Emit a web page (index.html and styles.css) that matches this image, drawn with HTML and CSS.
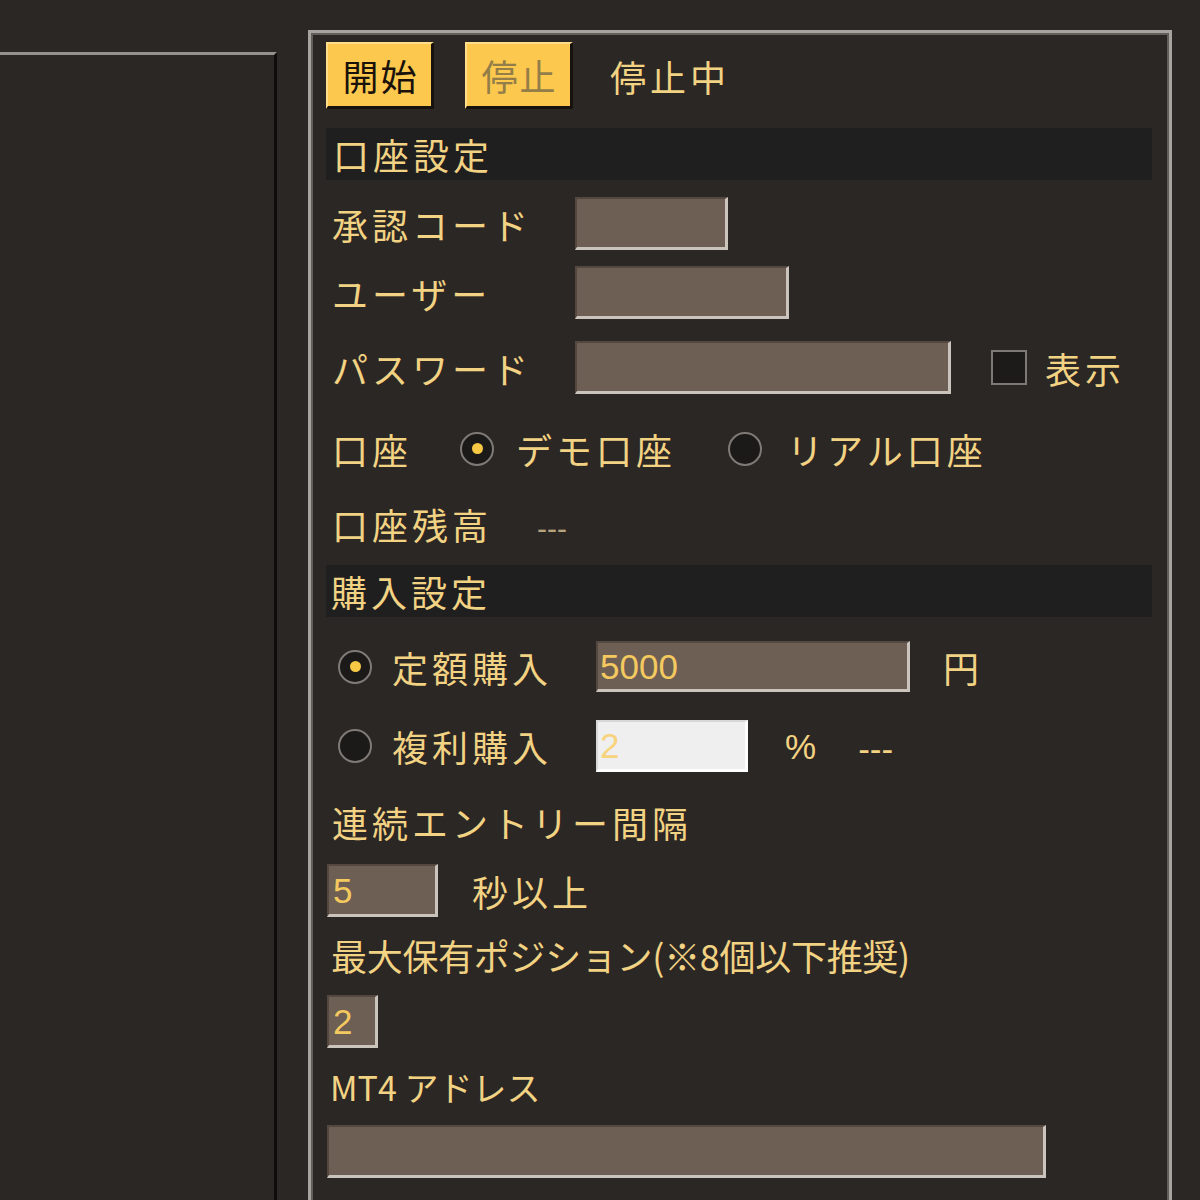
FILE: index.html
```html
<!DOCTYPE html>
<html lang="ja">
<head>
<meta charset="utf-8">
<title>設定</title>
<link rel="stylesheet" href="styles.css">
</head>
<body>
<div class="screen">
  <div class="side"></div>
  <div class="panel">
    <div class="toolbar">
      <div class="btn">開始</div>
      <div class="btn disabled">停止</div>
      <span class="status">停止中</span>
    </div>

    <div class="section">口座設定</div>

    <div class="row r-code">
      <span class="label">承認コード</span>
      <div class="field w-code"></div>
    </div>
    <div class="row r-user">
      <span class="label">ユーザー</span>
      <div class="field w-user"></div>
    </div>
    <div class="row r-pass">
      <span class="label">パスワード</span>
      <div class="field w-pass"></div>
      <div class="check"></div>
      <span class="txt show">表示</span>
    </div>
    <div class="row r-acct">
      <span class="label acct-label">口座</span>
      <div class="radio on"></div>
      <span class="txt opt">デモ口座</span>
      <div class="radio second"></div>
      <span class="txt opt">リアル口座</span>
    </div>
    <div class="row r-bal">
      <span class="txt">口座残高</span>
      <span class="dim-dash">---</span>
    </div>

    <div class="section s2">購入設定</div>

    <div class="row r-fixed">
      <div class="radio on"></div>
      <span class="txt buy-label">定額購入</span>
      <div class="field w-fixed"><span class="num">5000</span></div>
      <span class="txt yen">円</span>
    </div>
    <div class="row r-comp">
      <div class="radio"></div>
      <span class="txt buy-label">複利購入</span>
      <div class="field white w-comp"><span class="num light">2</span></div>
      <span class="latin pct">%</span>
      <span class="latin dash">---</span>
    </div>

    <div class="textrow t-interval"><span class="txt">連続エントリー間隔</span></div>
    <div class="row r-sec">
      <div class="field w-sec"><span class="num">5</span></div>
      <span class="txt sec">秒以上</span>
    </div>

    <div class="textrow t-max"><span class="txt tight">最大保有ポジション(※8個以下推奨)</span></div>
    <div class="row r-max">
      <div class="field w-max"><span class="num">2</span></div>
    </div>

    <div class="textrow t-mt4"><span class="txt mt4">MT4 アドレス</span></div>
    <div class="row r-mt4">
      <div class="field w-mt4"></div>
    </div>
  </div>
</div>
</body>
</html>
```

FILE: styles.css
```css
html, body {
  margin: 0;
  height: 1200px;
  overflow: hidden;
  background: #2b2724;
}

body {
  font-family: "Noto Sans CJK JP", "Noto Sans", sans-serif;
  color: #f2d283;
}

.screen {
  display: flex;
  align-items: flex-start;
  height: 1200px;
}

.side {
  width: 274px;
  height: 1200px;
  margin-top: 52px;
  border-top: 3px solid #94918e;
  border-right: 3px solid #0e0c0b;
  flex: none;
}

.panel {
  flex: none;
  margin-left: 31px;
  margin-top: 30px;
  width: 826px;
  height: 1200px;
  padding: 9px 17px 0 15px;
  border: 3px solid #a7a39f;
  box-shadow: inset 0 0 0 2px #625e5a;
  display: flex;
  flex-direction: column;
}

/* toolbar */
.toolbar {
  display: flex;
  align-items: center;
  height: 67px;
  flex: none;
}

.btn {
  width: 108px;
  height: 67px;
  box-sizing: border-box;
  background: #fcc84e;
  border-top: 2px solid #ffdd8a;
  border-left: 2px solid #ffdd8a;
  border-right: 3px solid #17120d;
  border-bottom: 3px solid #17120d;
  font-size: 36px;
  line-height: 1;
  letter-spacing: 2px;
  color: #1a120a;
  display: flex;
  align-items: center;
  justify-content: center;
  padding-left: 2px;
}

.btn + .btn {
  margin-left: 31px;
}

.btn.disabled {
  color: #937d48;
}

.status {
  margin-left: 37px;
  font-size: 36px;
  line-height: 1;
  letter-spacing: 4px;
}

/* section headers */
.section {
  flex: none;
  margin-top: 19px;
  height: 52px;
  background: #1f1f1f;
  padding-left: 7px;
  display: flex;
  align-items: center;
  font-size: 36px;
  line-height: 1;
  letter-spacing: 4px;
}

.section.s2 {
  margin-top: 15px;
  padding-left: 5px;
}

/* rows */
.row {
  flex: none;
  display: flex;
  align-items: center;
  height: 53px;
  padding-left: 6px;
}

.label, .txt {
  font-size: 36px;
  line-height: 1;
  letter-spacing: 4px;
  white-space: nowrap;
}

.label {
  width: 243px;
  flex: none;
}

.field {
  flex: none;
  height: 53px;
  box-sizing: border-box;
  background: #6e5f54;
  border-top: 2px solid #554840;
  border-left: 2px solid #554840;
  border-right: 3px solid #cbc4bc;
  border-bottom: 3px solid #cbc4bc;
  display: flex;
  align-items: center;
}

.field.white {
  background: #efefef;
  border-top-color: #d8d8d8;
  border-left-color: #d8d8d8;
  border-right-color: #ffffff;
  border-bottom-color: #ffffff;
}

.num {
  font-family: "Liberation Sans", Arial, sans-serif;
  font-size: 35px;
  line-height: 1;
  color: #f4c95f;
  padding-left: 2px;
}

.num.light {
  color: #f7d37c;
}

.latin {
  font-family: "Liberation Sans", Arial, sans-serif;
  font-size: 35px;
  line-height: 1;
  color: #f2d283;
}

.r-code { margin-top: 17px; }
.r-user { margin-top: 16px; }
.r-pass { margin-top: 22px; }
.r-acct { margin-top: 28px; }
.r-bal  { margin-top: 22px; }

.w-code { width: 153px; }
.w-user { width: 214px; }
.w-pass { width: 376px; }

.check {
  flex: none;
  width: 36px;
  height: 35px;
  box-sizing: border-box;
  margin-left: 40px;
  background: #1d1b1a;
  border: 2px solid #7d7975;
}

.show {
  margin-left: 18px;
}

/* radios */
.radio {
  flex: none;
  position: relative;
  width: 34px;
  height: 34px;
  box-sizing: border-box;
  border-radius: 50%;
  border: 2px solid #7f7a76;
  background: #1c1a19;
}

.radio.on::after {
  content: "";
  position: absolute;
  left: 50%;
  top: 50%;
  width: 11px;
  height: 11px;
  margin: -5.5px 0 0 -5.5px;
  border-radius: 50%;
  background: #f6c844;
}

.acct-label {
  width: 128px;
}

.opt {
  margin-left: 22px;
}

.radio.second {
  margin-left: 52px;
}

.radio.second + .opt {
  margin-left: 25px;
}

.dim-dash {
  margin-left: 45px;
  margin-top: 10px;
  font-family: "Liberation Sans", Arial, sans-serif;
  font-size: 30px;
  line-height: 1;
  color: #b6a47f;
}

/* purchase */
.r-fixed {
  margin-top: 24px;
  height: 51px;
  padding-left: 12px;
}

.r-comp {
  margin-top: 28px;
  height: 52px;
  padding-left: 12px;
}

.buy-label {
  width: 204px;
  margin-left: 20px;
  flex: none;
}

.w-fixed { width: 314px; height: 51px; }
.w-comp  { width: 152px; height: 52px; }

.yen { margin-left: 33px; }
.pct { margin-left: 37px; }
.dash { margin-left: 42px; margin-top: 4px; }

/* bottom part */
.textrow {
  flex: none;
  height: 40px;
  display: flex;
  align-items: center;
  padding-left: 6px;
}

.t-interval { margin-top: 30px; }
.t-max { margin-top: 18px; padding-left: 5px; }
.t-mt4 { margin-top: 19px; padding-left: 4px; }

.tight {
  letter-spacing: -0.3px;
}

.mt4 {
  letter-spacing: 0;
  font-size: 34px;
}

.r-sec { margin-top: 22px; padding-left: 1px; }
.r-max { margin-top: 20px; padding-left: 1px; }
.r-mt4 { margin-top: 18px; padding-left: 1px; }

.w-sec { width: 111px; }
.w-max { width: 51px; }
.w-mt4 { width: 719px; }

.w-sec .num, .w-max .num {
  padding-left: 4px;
}

.sec { margin-left: 34px; }
```
